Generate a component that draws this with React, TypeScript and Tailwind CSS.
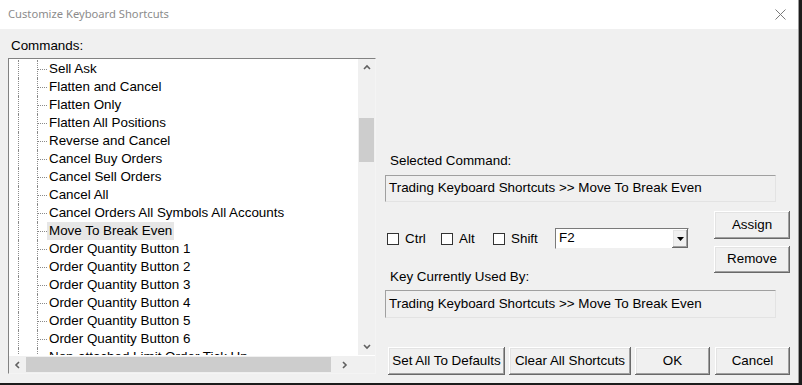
import React from "react";

const items = [
  "Sell Ask",
  "Flatten and Cancel",
  "Flatten Only",
  "Flatten All Positions",
  "Reverse and Cancel",
  "Cancel Buy Orders",
  "Cancel Sell Orders",
  "Cancel All",
  "Cancel Orders All Symbols All Accounts",
  "Move To Break Even",
  "Order Quantity Button 1",
  "Order Quantity Button 2",
  "Order Quantity Button 3",
  "Order Quantity Button 4",
  "Order Quantity Button 5",
  "Order Quantity Button 6",
  "Non-attached Limit Order Tick Up",
];

const btn =
  "flex items-center justify-center bg-[#f0f0f0] text-[13.4px] text-black shadow-[inset_-1px_-1px_#696969,inset_1px_1px_#ffffff,inset_-2px_-2px_#a0a0a0,inset_2px_2px_#e3e3e3]";

function Check({ label, w }: { label: string; w: string }) {
  return (
    <div className={`flex items-center ${w}`}>
      <div className="w-[12px] h-[12px] border border-[#333] bg-white" />
      <span className="ml-[6px] text-[13.4px] leading-[15px]">{label}</span>
    </div>
  );
}

function Chevron({ dir }: { dir: "up" | "down" | "left" | "right" }) {
  const d =
    dir === "up"
      ? "M1 5 L4 2 L7 5"
      : dir === "down"
      ? "M1 2 L4 5 L7 2"
      : dir === "left"
      ? "M5 1 L2 4 L5 7"
      : "M2 1 L5 4 L2 7";
  return (
    <svg width="8" height="8" viewBox="0 0 8 8">
      <path d={d} fill="none" stroke="#606060" strokeWidth="1.6" />
    </svg>
  );
}

export default function App() {
  return (
    <div
      className="w-[802px] h-[385px] bg-[#1c1c1c] overflow-hidden"
      style={{ fontFamily: '"Liberation Sans", Arial, sans-serif' }}
    >
      <div className="w-[799px] h-[383px] flex flex-col border-r border-[#9a9a9a]">
        {/* title bar */}
        <div className="h-[29px] bg-white flex items-center justify-between pl-[8px] pr-[12px]">
          <span
            className="text-[11.2px] text-[#8c8c8c]"
            style={{ fontFamily: '"Noto Sans", "Open Sans", sans-serif' }}
          >
            Customize Keyboard Shortcuts
          </span>
          <svg width="11" height="11" viewBox="0 0 11 11">
            <path d="M0.5 0.5 L10.5 10.5 M10.5 0.5 L0.5 10.5" stroke="#7a7a7a" strokeWidth="1" fill="none" />
          </svg>
        </div>

        {/* client */}
        <div className="flex-1 bg-[#f0f0f0] flex pl-[8px] text-black">
          {/* left column */}
          <div className="w-[368px] flex flex-col">
            <div className="h-[29px] flex items-end pl-[3px] pb-[5px] text-[13.4px] leading-[15px]">Commands:</div>
            <div className="w-[368px] h-[316px] border-t border-l border-[#828282] border-r border-b border-r-[#f4f4f4] border-b-[#f4f4f4] flex flex-col bg-white">
              <div className="flex h-[297px]">
                {/* tree content */}
                <div className="w-[349px] h-[296px] overflow-hidden flex flex-col pt-[1px]">
                  {items.map((t, i) => (
                    <div key={t} className="flex h-[18px] shrink-0">
                      <div className="w-[9px]" />
                      <div className="w-[19px] border-l border-dotted border-[#8a8a8a]" />
                      <div className="flex items-center border-l border-dotted border-[#8a8a8a]">
                        <div className="w-[9px] border-t border-dotted border-[#8a8a8a]" />
                        <span
                          className={`h-[18px] px-[2px] flex items-center whitespace-nowrap text-[13.4px] ${
                            i === 9 ? "bg-[#e6e6e6]" : ""
                          }`}
                        >
                          {t}
                        </span>
                      </div>
                    </div>
                  ))}
                </div>
                {/* vertical scrollbar */}
                <div className="w-[17px] h-[296px] bg-[#f0f0f0] flex flex-col items-center">
                  <div className="h-[17px] flex items-center justify-center">
                    <Chevron dir="up" />
                  </div>
                  <div className="mt-[42px] w-[15px] h-[44px] bg-[#cdcdcd]" />
                  <div className="flex-1" />
                  <div className="h-[17px] flex items-center justify-center">
                    <Chevron dir="down" />
                  </div>
                </div>
              </div>
              {/* horizontal scrollbar */}
              <div className="flex h-[17px]">
                <div className="w-[349px] bg-[#f0f0f0] flex items-center">
                  <div className="w-[17px] flex items-center justify-center">
                    <Chevron dir="left" />
                  </div>
                  <div className="h-[15px] w-[305px] bg-[#cdcdcd]" />
                  <div className="flex-1 flex items-center justify-center">
                    <Chevron dir="right" />
                  </div>
                </div>
                <div className="w-[17px] bg-[#f0f0f0]" />
              </div>
            </div>
          </div>

          {/* right column */}
          <div className="ml-[9px] w-[405px] flex flex-col">
            <div className="h-[140px] flex items-end pl-[5px] pb-[1px] text-[13.4px] leading-[15px]">
              Selected Command:
            </div>
            <div className="mt-[6px] w-[391px] h-[27px] border border-[#a0a0a0] border-r-[#e3e3e3] border-b-[#e3e3e3] flex items-center pl-[3px] text-[13.4px] whitespace-nowrap">
              Trading Keyboard Shortcuts &gt;&gt; Move To Break Even
            </div>
            <div className="mt-[9px] flex h-[62px]">
              <div className="flex items-center pl-[2px] h-[21px] mt-[17px] w-[329px]">
                <Check label="Ctrl" w="w-[54px]" />
                <Check label="Alt" w="w-[52px]" />
                <Check label="Shift" w="w-[62px]" />
                <div className="w-[134px] h-[21px] bg-white flex items-center border border-[#7a7a7a] border-r-[#f0f0f0] border-b-[#f0f0f0]">
                  <span className="flex-1 pl-[3px] text-[13.4px]">F2</span>
                  <div className={`${btn} w-[16px] h-[19px]`}>
                    <svg width="7" height="4" viewBox="0 0 7 4">
                      <path d="M0 0 L7 0 L3.5 4 Z" fill="#000" />
                    </svg>
                  </div>
                </div>
              </div>
              <div className="flex flex-col">
                <div className={`${btn} w-[76px] h-[28px]`}>Assign</div>
                <div className={`${btn} w-[76px] h-[27px] mt-[7px]`}>Remove</div>
              </div>
            </div>
            <div className="mt-[-4px] pl-[5px] text-[13.4px] leading-[15px]">Key Currently Used By:</div>
            <div className="mt-[6px] w-[391px] h-[28px] border border-[#a0a0a0] border-r-[#e3e3e3] border-b-[#e3e3e3] flex items-center pl-[3px] text-[13.4px] whitespace-nowrap">
              Trading Keyboard Shortcuts &gt;&gt; Move To Break Even
            </div>
            <div className="mt-[29px] flex pl-[3px]">
              <div className={`${btn} w-[117px] h-[28px]`}>Set All To Defaults</div>
              <div className={`${btn} w-[122px] h-[28px] ml-[4px]`}>Clear All Shortcuts</div>
              <div className={`${btn} w-[75px] h-[28px] ml-[4px]`}>OK</div>
              <div className={`${btn} w-[75px] h-[28px] ml-[5px]`}>Cancel</div>
            </div>
          </div>
        </div>
      </div>
    </div>
  );
}
